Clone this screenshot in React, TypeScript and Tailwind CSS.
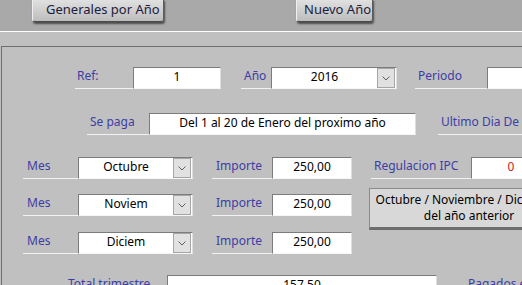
import React from "react"

const font = "font-['Noto_Sans',sans-serif]"

function Label({ text, cls }: { text: string; cls: string }) {
  return (
    <div className={"h-[22px] shrink-0 border-b border-[#f2f2f2] pt-[1px] text-[12px] leading-[15px] whitespace-nowrap text-[#3d3da6] " + cls}>
      {text}
    </div>
  )
}

function Field({ value, cls, red }: { value: string; cls: string; red?: boolean }) {
  return (
    <div
      className={
        "h-[22px] shrink-0 bg-white border border-t-[#7c7c7c] border-l-[#7c7c7c] border-r-[#dedede] border-b-[#f6f6f6] pt-[1px] text-center text-[12px] leading-[15px] whitespace-nowrap " +
        (red ? "text-[#d02020] border-b-[#d84040] " : "text-black ") +
        cls
      }
    >
      {value}
    </div>
  )
}

function Combo({ value, cls }: { value: string; cls: string }) {
  return (
    <div className={"h-[22px] shrink-0 flex bg-white border border-t-[#7c7c7c] border-l-[#7c7c7c] border-r-[#dedede] border-b-[#f6f6f6] " + cls}>
      <div className="flex-1 pt-[1px] text-center text-[12px] leading-[15px] text-black">{value}</div>
      <div className="w-[18px] h-[20px] bg-[#e1e1e1] border border-[#a6a6a6] flex items-center justify-center mr-px">
        <svg width="8" height="5" viewBox="0 0 8 5">
          <path d="M0.5 0.5 L4 4 L7.5 0.5" fill="none" stroke="#606060" strokeWidth="1" />
        </svg>
      </div>
    </div>
  )
}

function HeadButton({ text, cls }: { text: string; cls: string }) {
  return (
    <div
      className={
        "h-[23px] -mt-[1px] shrink-0 whitespace-nowrap rounded-b-[3px] border border-t-0 border-l-[#f0f0f0] border-r-[#5a5a5a] border-b-[#4a4a4a] bg-gradient-to-b from-[#e2e2e2] to-[#bdbdbd] shadow-[1px_2px_2px_rgba(0,0,0,0.55)] text-[13px] leading-[20px] text-[#1c1c3c] " +
        cls
      }
    >
      {text}
    </div>
  )
}

export default function App() {
  const meses = ["Octubre", "Noviem", "Diciem"]
  return (
    <div className={"w-[522px] h-[285px] overflow-hidden bg-[#c0c0c0] " + font}>
      <div className="h-[31px] bg-[#a9a9a9] flex items-start">
        <HeadButton text="Generales por Año" cls="ml-[32px] w-[132px] pl-[13px]" />
        <HeadButton text="Nuevo Año" cls="ml-[132px] w-[77px] pl-[7px]" />
      </div>
      <div className="h-px bg-white" />
      <div className="h-[14px] bg-[#c0c0c0]" />
      <div className="ml-px border-t border-l border-[#6e6e6e] bg-[#c0c0c0] h-[300px] pr-[1px]">
        <div className="flex mt-[20px]">
          <div className="ml-[43px] w-px h-[20px] mt-px bg-[#333333]" />
          <Label text="Ref:" cls="ml-[30px] w-[58px] pl-[2px]" />
          <Field value="1" cls="w-[88px]" />
          <Label text="Año" cls="ml-[20px] w-[30px] pl-[3px]" />
          <Combo value="2016" cls="w-[126px]" />
          <Label text="Periodo" cls="ml-[18px] w-[72px] pl-[3px]" />
          <Field value="" cls="w-[80px]" />
        </div>
        <div className="flex mt-[24px]">
          <Label text="Se paga" cls="ml-[85px] w-[62px] pl-[3px]" />
          <Field value="Del 1 al 20 de Enero del proximo año" cls="w-[267px]" />
          <Label text="Ultimo Dia De Pago" cls="ml-[22px] w-[130px] pl-[3px]" />
        </div>
        <div className="flex mt-[22px]">
          <div className="flex flex-col gap-[15px]">
            {meses.map((m, i) => (
              <div key={m} className={"flex " + (i === 2 ? "mt-px" : "")}>
                <Label text="Mes" cls="ml-[21px] w-[55px] pl-[4px]" />
                <Combo value={m} cls="w-[115px]" />
                <Label text="Importe" cls="ml-[19px] w-[60px] pl-[4px]" />
                <Field value="250,00" cls="w-[80px]" />
              </div>
            ))}
          </div>
          <div className="ml-[17px] flex flex-col shrink-0">
            <div className="flex">
              <Label text="Regulacion IPC" cls="ml-[2px] w-[100px] pl-[3px]" />
              <Field value="0" cls="w-[80px]" red />
            </div>
            <div className="mt-[9px] w-[200px] h-[42px] bg-[#d8d8d8] border border-t-[#8a8a8a] border-l-[#8a8a8a] border-r-[#6a6a6a] border-b-[3px] border-b-[#6e6e6e] text-center text-[12px] leading-[16px] text-black pt-[3px]">
              <div className="whitespace-nowrap">Octubre / Noviembre / Diciembre</div>
              <div>del año anterior</div>
            </div>
          </div>
        </div>
        <div className="flex mt-[21px]">
          <Label text="Total trimestre" cls="ml-[63px] w-[102px] pl-[3px]" />
          <Field value="157,50" cls="w-[270px]" />
          <Label text="Pagados en el año" cls="ml-[28px] w-[120px] pl-[3px]" />
        </div>
      </div>
    </div>
  )
}
